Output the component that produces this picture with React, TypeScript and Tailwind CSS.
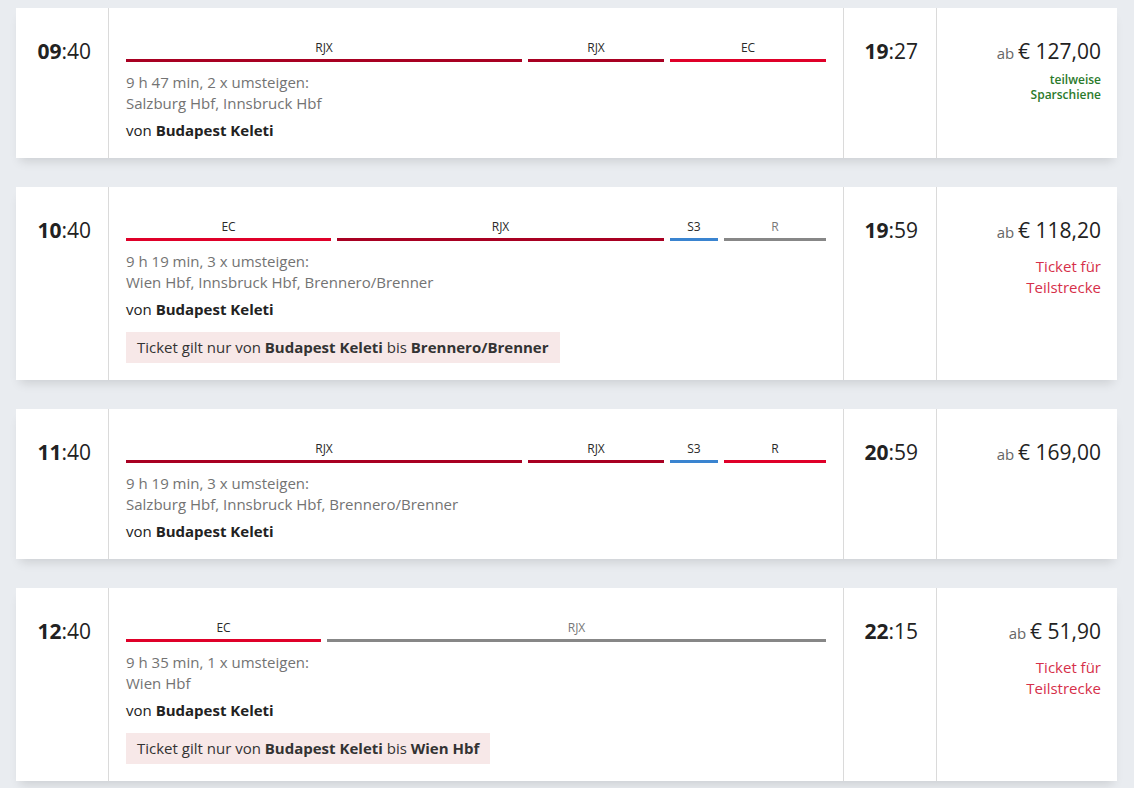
import React from 'react';

type Leg = { name: string; kind: 'rjx' | 'ec' | 's' | 'grey' | 'r'; w: number };

type Connection = {
  dep: [string, string];
  arr: [string, string];
  legs: Leg[];
  duration: string;
  via: string;
  price: string;
  note?: 'spar' | 'teil';
  validTo?: string;
};

const connections: Connection[] = [
  {
    dep: ['09', '40'],
    arr: ['19', '27'],
    legs: [
      { name: 'RJX', kind: 'rjx', w: 396 },
      { name: 'RJX', kind: 'rjx', w: 136 },
      { name: 'EC', kind: 'ec', w: 156 },
    ],
    duration: '9 h 47 min, 2 x umsteigen:',
    via: 'Salzburg Hbf, Innsbruck Hbf',
    price: '€ 127,00',
    note: 'spar',
  },
  {
    dep: ['10', '40'],
    arr: ['19', '59'],
    legs: [
      { name: 'EC', kind: 'ec', w: 205 },
      { name: 'RJX', kind: 'rjx', w: 327 },
      { name: 'S3', kind: 's', w: 48 },
      { name: 'R', kind: 'grey', w: 102 },
    ],
    duration: '9 h 19 min, 3 x umsteigen:',
    via: 'Wien Hbf, Innsbruck Hbf, Brennero/Brenner',
    price: '€ 118,20',
    note: 'teil',
    validTo: 'Brennero/Brenner',
  },
  {
    dep: ['11', '40'],
    arr: ['20', '59'],
    legs: [
      { name: 'RJX', kind: 'rjx', w: 396 },
      { name: 'RJX', kind: 'rjx', w: 136 },
      { name: 'S3', kind: 's', w: 48 },
      { name: 'R', kind: 'r', w: 102 },
    ],
    duration: '9 h 19 min, 3 x umsteigen:',
    via: 'Salzburg Hbf, Innsbruck Hbf, Brennero/Brenner',
    price: '€ 169,00',
  },
  {
    dep: ['12', '40'],
    arr: ['22', '15'],
    legs: [
      { name: 'EC', kind: 'ec', w: 195 },
      { name: 'RJX', kind: 'grey', w: 499 },
    ],
    duration: '9 h 35 min, 1 x umsteigen:',
    via: 'Wien Hbf',
    price: '€ 51,90',
    note: 'teil',
    validTo: 'Wien Hbf',
  },
];

const lineColor: Record<Leg['kind'], string> = {
  rjx: 'bg-[#a80022]',
  ec: 'bg-[#df0029]',
  r: 'bg-[#df0029]',
  s: 'bg-[#3a84d0]',
  grey: 'bg-[#878787]',
};

const Time: React.FC<{ t: [string, string] }> = ({ t }) => (
  <div className="text-[21px] leading-[28px] text-[#222]">
    <span className="font-bold">{t[0]}</span>:{t[1]}
  </div>
);

const ConnectionCard: React.FC<{ c: Connection }> = ({ c }) => (
  <div className="flex bg-white shadow-[0_7px_10px_-4px_rgba(0,0,0,0.13)]">
    <div className="flex w-[93px] shrink-0 justify-end border-r border-[#dadada] pr-[17px] pt-[29px]">
      <Time t={c.dep} />
    </div>

    <div className="w-[735px] shrink-0 border-r border-[#dadada] px-[17px] pb-[17px] pt-[32px]">
      <div className="flex gap-[6px]">
        {c.legs.map((leg, i) => (
          <div key={i} className="min-w-0" style={{ flexGrow: leg.w, flexBasis: 0 }}>
            <div
              className={`text-center text-[12px] leading-[16px] ${
                leg.kind === 'grey' ? 'text-[#777]' : 'text-[#2a2a2a]'
              }`}
            >
              {leg.name}
            </div>
            <div className={`mt-[3px] h-[3px] ${lineColor[leg.kind]}`} />
          </div>
        ))}
      </div>
      <div className="mt-[10px] text-[15px] leading-[21px] text-[#737373]">
        <div>{c.duration}</div>
        <div>{c.via}</div>
      </div>
      <div className="mt-[6px] text-[15px] leading-[21px] text-[#222]">
        von <span className="font-bold">Budapest Keleti</span>
      </div>
      {c.validTo && (
        <div className="mt-[12px] inline-block bg-[#f7e8e8] px-[11px] py-[5px] text-[15px] leading-[21px] text-[#333]">
          Ticket gilt nur von <span className="font-bold">Budapest Keleti</span> bis{' '}
          <span className="font-bold">{c.validTo}</span>
        </div>
      )}
    </div>

    <div className="flex w-[93px] shrink-0 justify-end border-r border-[#dadada] pr-[18px] pt-[29px]">
      <Time t={c.arr} />
    </div>

    <div className="flex-1 pr-[16px] pt-[29px] text-right">
      <div className="leading-[28px] text-[#222]">
        <span className="text-[15px] text-[#666]">ab </span>
        <span className="text-[21px]">{c.price}</span>
      </div>
      {c.note === 'spar' && (
        <div className="mt-[5px] text-[12px] font-semibold leading-[15px] text-[#2b7a2b]">
          <div>teilweise</div>
          <div>Sparschiene</div>
        </div>
      )}
      {c.note === 'teil' && (
        <div className="mt-[10px] text-[15px] leading-[21px] text-[#d6304a]">
          Ticket für
          <br />
          Teilstrecke
        </div>
      )}
    </div>
  </div>
);

const App: React.FC = () => (
  <div
    className="min-h-screen bg-[#e9ecf0] px-4 pt-2 pb-2"
    style={{ fontFamily: '"Open Sans", "Noto Sans", sans-serif' }}
  >
    <div className="flex w-[1101px] flex-col gap-[29px]">
      {connections.map((c, i) => (
        <ConnectionCard key={i} c={c} />
      ))}
    </div>
  </div>
);

export default App;
